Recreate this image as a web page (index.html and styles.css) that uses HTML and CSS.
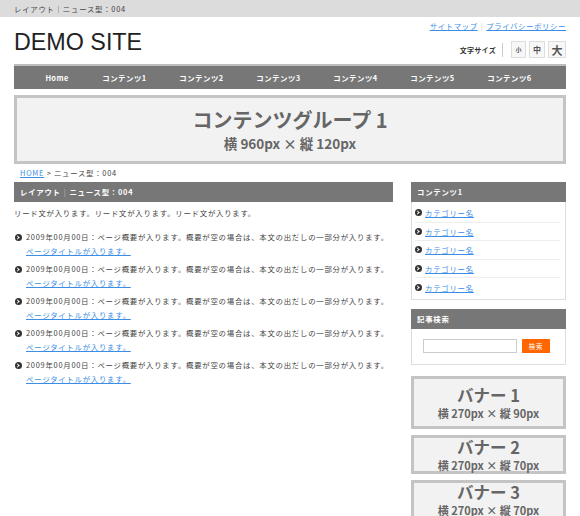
FILE: index.html
```html
<!DOCTYPE html>
<html lang="ja">
<head>
<meta charset="utf-8">
<title>DEMO SITE</title>
<link rel="stylesheet" href="styles.css">
</head>
<body>
<div class="topbar"><span>レイアウト｜ニュース型：004</span></div>
<div class="wrap">
  <header class="header">
    <div class="logo">DEMO SITE</div>
    <div class="hright">
      <div class="hlinks"><a href="#">サイトマップ</a><span class="sep">|</span><a href="#">プライバシーポリシー</a></div>
      <div class="fsize">
        <span class="fsize-label">文字サイズ</span>
        <span class="fsize-sep"></span>
        <span class="fbtn fs-s">小</span>
        <span class="fbtn fs-m">中</span>
        <span class="fbtn fs-l">大</span>
      </div>
    </div>
  </header>
  <nav class="nav">
    <a class="nav-home" href="#">Home</a>
    <a href="#">コンテンツ1</a>
    <a href="#">コンテンツ2</a>
    <a href="#">コンテンツ3</a>
    <a href="#">コンテンツ4</a>
    <a href="#">コンテンツ5</a>
    <a href="#">コンテンツ6</a>
  </nav>
  <div class="hero">
    <div class="hero-title">コンテンツグループ 1</div>
    <div class="hero-sub">横 960px × 縦 120px</div>
  </div>
  <div class="crumb"><a href="#">HOME</a> &gt; ニュース型：004</div>
  <div class="cols">
    <main class="main">
      <h1 class="bar">レイアウト<span class="bsep">|</span>ニュース型：004</h1>
      <p class="lead">リード文が入ります。リード文が入ります。リード文が入ります。</p>
      <ul class="news">
        <li><span class="ico"></span><div><p>2009年00月00日：ページ概要が入ります。概要が空の場合は、本文の出だしの一部分が入ります。</p><a href="#">ページタイトルが入ります。</a></div></li>
        <li><span class="ico"></span><div><p>2009年00月00日：ページ概要が入ります。概要が空の場合は、本文の出だしの一部分が入ります。</p><a href="#">ページタイトルが入ります。</a></div></li>
        <li><span class="ico"></span><div><p>2009年00月00日：ページ概要が入ります。概要が空の場合は、本文の出だしの一部分が入ります。</p><a href="#">ページタイトルが入ります。</a></div></li>
        <li><span class="ico"></span><div><p>2009年00月00日：ページ概要が入ります。概要が空の場合は、本文の出だしの一部分が入ります。</p><a href="#">ページタイトルが入ります。</a></div></li>
        <li><span class="ico"></span><div><p>2009年00月00日：ページ概要が入ります。概要が空の場合は、本文の出だしの一部分が入ります。</p><a href="#">ページタイトルが入ります。</a></div></li>
      </ul>
    </main>
    <aside class="side">
      <div class="sbox">
        <div class="bar">コンテンツ1</div>
        <ul class="cats">
          <li><span class="ico"></span><a href="#">カテゴリー名</a></li>
          <li><span class="ico"></span><a href="#">カテゴリー名</a></li>
          <li><span class="ico"></span><a href="#">カテゴリー名</a></li>
          <li><span class="ico"></span><a href="#">カテゴリー名</a></li>
          <li><span class="ico"></span><a href="#">カテゴリー名</a></li>
        </ul>
      </div>
      <div class="sbox sbox-search">
        <div class="bar">記事検索</div>
        <div class="search"><span class="sinput"></span><span class="sbtn">検索</span></div>
      </div>
      <div class="banner b1"><div class="bt">バナー 1</div><div class="bs">横 270px × 縦 90px</div></div>
      <div class="banner b2"><div class="bt">バナー 2</div><div class="bs">横 270px × 縦 70px</div></div>
      <div class="banner b2"><div class="bt">バナー 3</div><div class="bs">横 270px × 縦 70px</div></div>
    </aside>
  </div>
</div>
</body>
</html>
```
FILE: styles.css
```css
* { box-sizing: border-box; }
html, body { margin: 0; padding: 0; }
body {
  font-family: "Noto Sans CJK JP", "Noto Sans", sans-serif;
  font-size: 7.4px;
  letter-spacing: 0.75px;
  color: #444;
  background: #fff;
  width: 580px;
  height: 516px;
  overflow: hidden;
}
a { color: #3a8ee6; text-decoration: underline; }
ul { list-style: none; margin: 0; padding: 0; }
p { margin: 0; }
h1 { margin: 0; font-size: inherit; }

.topbar {
  height: 17px;
  background: #dcdcdc;
  padding-left: 14px;
  display: flex;
  align-items: center;
  color: #444;
}
.wrap { width: 552px; margin-left: 14px; }

.header {
  height: 47px;
  display: flex;
  justify-content: space-between;
}
.logo {
  font-family: "Liberation Sans", Arial, sans-serif;
  font-size: 23.3px;
  letter-spacing: 0;
  color: #222;
  padding-top: 13px;
  line-height: 24px;
}
.hright { display: flex; flex-direction: column; align-items: flex-end; }
.hlinks { margin-top: 4px; line-height: 10px; letter-spacing: 0.6px; }
.hlinks .sep { color: #ccc; margin: 0 3px; }
.fsize { display: flex; align-items: center; margin-top: 10px; }
.fsize-label { font-weight: bold; color: #333; font-size: 7px; letter-spacing: 0.3px; }
.fsize-sep { width: 1px; height: 14px; background: #ccc; margin: 0 5px 0 6px; }
.fbtn {
  width: 16px; height: 17px;
  border: 1px solid #ddd;
  background: #f7f7f7;
  display: flex; align-items: center; justify-content: center;
  color: #555; font-weight: bold; letter-spacing: 0;
  margin-left: 3px;
}
.fs-s { font-size: 6px; width: 15px; }
.fs-m { font-size: 8px; }
.fs-l { font-size: 11px; width: 18px; }

.nav {
  height: 25px;
  background: #777;
  border-top: 2px solid #bdbdbd;
  display: flex;
  align-items: center;
  padding-left: 28px;
}
.nav a {
  color: #fff; text-decoration: none; font-weight: bold;
  width: 77px; text-align: center; letter-spacing: 0.5px;
}
.nav a.nav-home { width: 30px; margin-right: 14px; letter-spacing: 0.4px; }

.hero {
  margin-top: 6px;
  height: 69px;
  border: 3px solid #c4c4c4;
  background: #f2f2f2;
  display: flex; flex-direction: column; align-items: center; justify-content: center;
  color: #666; font-weight: bold; letter-spacing: 0;
}
.hero-title { font-size: 20px; line-height: 26px; }
.hero-sub { font-size: 13.5px; line-height: 20px; }

.crumb { padding-left: 6px; height: 18px; line-height: 17px; }

.cols { display: flex; justify-content: space-between; }
.main { width: 379px; }
.side { width: 155px; }

.bar {
  height: 20px; line-height: 20px;
  background: #777; color: #fff; font-weight: bold;
  padding-left: 6px;
}
.bsep { color: #bbb; margin: 0 3px; font-weight: normal; }
.lead { margin-top: 6px; line-height: 10px; }
.news { margin-top: 14px; }
.news li { display: flex; height: 32px; }
.news p { line-height: 10px; }
.news a { display: inline-block; margin-top: 4px; line-height: 10px; }
.ico {
  width: 7px; height: 7px; border-radius: 50%;
  background: #333; flex: none; position: relative;
  margin: 1.5px 4px 0 1px;
}
.ico::after {
  content: ""; position: absolute; left: 1.4px; top: 2px;
  width: 2px; height: 2px;
  border-top: 1px solid #fff; border-right: 1px solid #fff;
  transform: rotate(45deg);
}

.sbox { border: 1px solid #ddd; border-top: none; margin-bottom: 9px; }
.sbox-search { margin-bottom: 11px; }
.sbox .bar { margin: 0 -1px; padding-left: 6px; }
.cats { padding: 2px 5px 2px 3px; }
.cats li {
  display: flex; align-items: center;
  height: 18.5px; border-bottom: 1px solid #eee;
}
.cats li:last-child { border-bottom: none; }
.cats .ico { margin: 0 3px 0 0; }
.search { display: flex; justify-content: center; align-items: center; height: 35px; padding-right: 4px; }
.sinput { width: 94px; height: 14px; border: 1px solid #ccc; background: #fff; }
.sbtn {
  width: 28px; height: 14px; margin-left: 5px;
  background: #ff6600; color: #fff; font-size: 6.5px;
  display: flex; align-items: center; justify-content: center;
}

.banner {
  border: 3px solid #c4c4c4; background: #f2f2f2;
  display: flex; flex-direction: column; align-items: center; justify-content: center;
  color: #666; font-weight: bold; letter-spacing: 0;
  margin-bottom: 6px;
}
.b1 { height: 53px; }
.b2 { height: 39px; }
.bt { font-size: 16.5px; line-height: 22px; flex: none; }
.bs { font-size: 11px; line-height: 15px; flex: none; }
```
